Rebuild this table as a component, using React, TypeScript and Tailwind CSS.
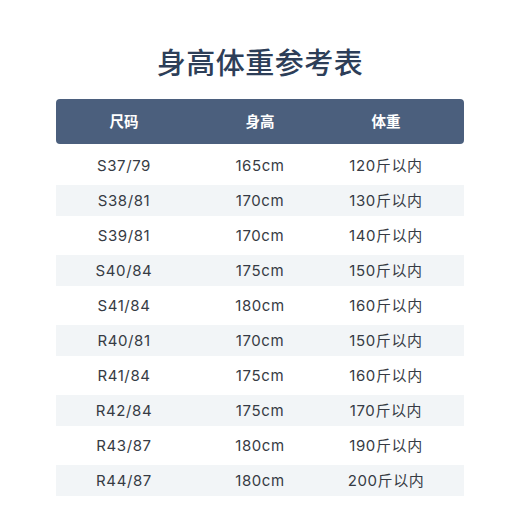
const rows = [
  ["S37/79", "165cm", "120斤以内"],
  ["S38/81", "170cm", "130斤以内"],
  ["S39/81", "170cm", "140斤以内"],
  ["S40/84", "175cm", "150斤以内"],
  ["S41/84", "180cm", "160斤以内"],
  ["R40/81", "170cm", "150斤以内"],
  ["R41/84", "175cm", "160斤以内"],
  ["R42/84", "175cm", "170斤以内"],
  ["R43/87", "180cm", "190斤以内"],
  ["R44/87", "180cm", "200斤以内"],
]

export default function App() {
  return (
    <div className="h-[520px] w-[520px] bg-white font-['Inter','Noto_Sans_CJK_SC',sans-serif]">
      <h1 className="pt-[45px] text-center text-[29px] font-medium leading-[38px] tracking-[0.5px] text-[#2d3e58]">
        身高体重参考表
      </h1>
      <div className="ml-[56px] mt-[16px] w-[408px]">
        <div className="grid h-[45px] grid-cols-[136px_136px_116px] items-center rounded-[4px] bg-[#4b5f7d] text-center text-[14.5px] font-semibold text-white">
          <div>尺码</div>
          <div>身高</div>
          <div>体重</div>
        </div>
        <div className="mt-[6px] flex flex-col gap-[4px]">
          {rows.map((r, i) => (
            <div
              key={r[0]}
              className={
                "grid h-[31px] grid-cols-[136px_136px_116px] items-center pt-[2px] text-center text-[15px] tracking-[0.6px] text-[#363b44] " +
                (i % 2 === 1 ? "bg-[#f2f5f7]" : "")
              }
            >
              <div>{r[0]}</div>
              <div>{r[1]}</div>
              <div>{r[2]}</div>
            </div>
          ))}
        </div>
      </div>
    </div>
  )
}
